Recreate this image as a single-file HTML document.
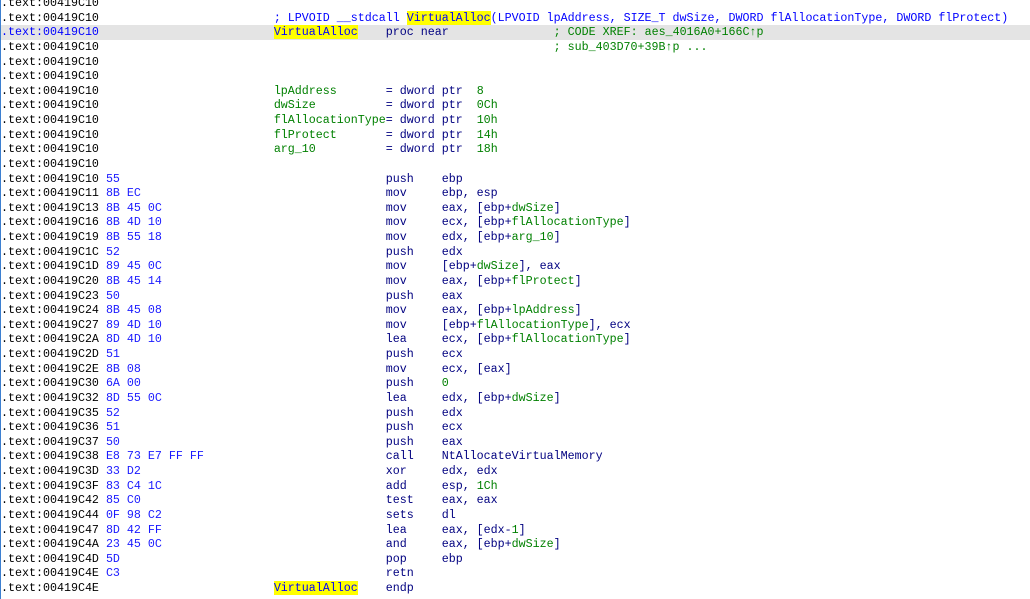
<!DOCTYPE html>
<html><head><meta charset="utf-8"><style>
html,body{margin:0;padding:0;width:1030px;height:599px;overflow:hidden}
body{background:#fff;position:relative}
#wrap{position:relative;width:1030px;height:599px;overflow:hidden}
#v{position:absolute;left:0;top:-4px;width:1030px;display:grid;grid-template-rows:repeat(40,14.63px);font-family:"Liberation Mono",monospace;font-size:11.67px;line-height:14.63px;color:#000}
.l{height:14.63px;padding-left:1px;white-space:pre;overflow:hidden}
.h{background:#e4e4e4}
.b{color:#1a1aff}
.n{color:#000080}
.g{color:#008000}
.c{color:#0000ff}
.y{background:#ffff00;color:#0000ff}
#bar{position:absolute;left:0;top:0;width:1px;height:599px;background:#3c7fd0}
</style></head><body><div id="wrap">
<div id="v"><div class="l">.text:00419C10</div><div class="l">.text:00419C10                         <span class="c">; LPVOID __stdcall </span><span class="y">VirtualAlloc</span><span class="c">(LPVOID lpAddress, SIZE_T dwSize, DWORD flAllocationType, DWORD flProtect)</span></div><div class="l h"><span class="c">.text:00419C10</span>                         <span class="y">VirtualAlloc</span>    <span class="n">proc near</span>               <span class="g">; CODE XREF: aes_4016A0+166C↑p</span></div><div class="l">.text:00419C10                                                                 <span class="g">; sub_403D70+39B↑p ...</span></div><div class="l">.text:00419C10</div><div class="l">.text:00419C10</div><div class="l">.text:00419C10                         <span class="g">lpAddress</span>       <span class="n">= dword ptr</span>  <span class="g">8</span></div><div class="l">.text:00419C10                         <span class="g">dwSize</span>          <span class="n">= dword ptr</span>  <span class="g">0Ch</span></div><div class="l">.text:00419C10                         <span class="g">flAllocationType</span><span class="n">= dword ptr</span>  <span class="g">10h</span></div><div class="l">.text:00419C10                         <span class="g">flProtect</span>       <span class="n">= dword ptr</span>  <span class="g">14h</span></div><div class="l">.text:00419C10                         <span class="g">arg_10</span>          <span class="n">= dword ptr</span>  <span class="g">18h</span></div><div class="l">.text:00419C10</div><div class="l">.text:00419C10 <span class="b">55</span>                                      <span class="n">push    ebp</span></div><div class="l">.text:00419C11 <span class="b">8B EC</span>                                   <span class="n">mov     ebp, esp</span></div><div class="l">.text:00419C13 <span class="b">8B 45 0C</span>                                <span class="n">mov     eax, [ebp+</span><span class="g">dwSize</span><span class="n">]</span></div><div class="l">.text:00419C16 <span class="b">8B 4D 10</span>                                <span class="n">mov     ecx, [ebp+</span><span class="g">flAllocationType</span><span class="n">]</span></div><div class="l">.text:00419C19 <span class="b">8B 55 18</span>                                <span class="n">mov     edx, [ebp+</span><span class="g">arg_10</span><span class="n">]</span></div><div class="l">.text:00419C1C <span class="b">52</span>                                      <span class="n">push    edx</span></div><div class="l">.text:00419C1D <span class="b">89 45 0C</span>                                <span class="n">mov     [ebp+</span><span class="g">dwSize</span><span class="n">], eax</span></div><div class="l">.text:00419C20 <span class="b">8B 45 14</span>                                <span class="n">mov     eax, [ebp+</span><span class="g">flProtect</span><span class="n">]</span></div><div class="l">.text:00419C23 <span class="b">50</span>                                      <span class="n">push    eax</span></div><div class="l">.text:00419C24 <span class="b">8B 45 08</span>                                <span class="n">mov     eax, [ebp+</span><span class="g">lpAddress</span><span class="n">]</span></div><div class="l">.text:00419C27 <span class="b">89 4D 10</span>                                <span class="n">mov     [ebp+</span><span class="g">flAllocationType</span><span class="n">], ecx</span></div><div class="l">.text:00419C2A <span class="b">8D 4D 10</span>                                <span class="n">lea     ecx, [ebp+</span><span class="g">flAllocationType</span><span class="n">]</span></div><div class="l">.text:00419C2D <span class="b">51</span>                                      <span class="n">push    ecx</span></div><div class="l">.text:00419C2E <span class="b">8B 08</span>                                   <span class="n">mov     ecx, [eax]</span></div><div class="l">.text:00419C30 <span class="b">6A 00</span>                                   <span class="n">push    </span><span class="g">0</span></div><div class="l">.text:00419C32 <span class="b">8D 55 0C</span>                                <span class="n">lea     edx, [ebp+</span><span class="g">dwSize</span><span class="n">]</span></div><div class="l">.text:00419C35 <span class="b">52</span>                                      <span class="n">push    edx</span></div><div class="l">.text:00419C36 <span class="b">51</span>                                      <span class="n">push    ecx</span></div><div class="l">.text:00419C37 <span class="b">50</span>                                      <span class="n">push    eax</span></div><div class="l">.text:00419C38 <span class="b">E8 73 E7 FF FF</span>                          <span class="n">call    NtAllocateVirtualMemory</span></div><div class="l">.text:00419C3D <span class="b">33 D2</span>                                   <span class="n">xor     edx, edx</span></div><div class="l">.text:00419C3F <span class="b">83 C4 1C</span>                                <span class="n">add     esp, </span><span class="g">1Ch</span></div><div class="l">.text:00419C42 <span class="b">85 C0</span>                                   <span class="n">test    eax, eax</span></div><div class="l">.text:00419C44 <span class="b">0F 98 C2</span>                                <span class="n">sets    dl</span></div><div class="l">.text:00419C47 <span class="b">8D 42 FF</span>                                <span class="n">lea     eax, [edx-</span><span class="g">1</span><span class="n">]</span></div><div class="l">.text:00419C4A <span class="b">23 45 0C</span>                                <span class="n">and     eax, [ebp+</span><span class="g">dwSize</span><span class="n">]</span></div><div class="l">.text:00419C4D <span class="b">5D</span>                                      <span class="n">pop     ebp</span></div><div class="l">.text:00419C4E <span class="b">C3</span>                                      <span class="n">retn</span></div><div class="l">.text:00419C4E                         <span class="y">VirtualAlloc</span>    <span class="n">endp</span></div></div>
<div id="bar"></div>
</div></body></html>
